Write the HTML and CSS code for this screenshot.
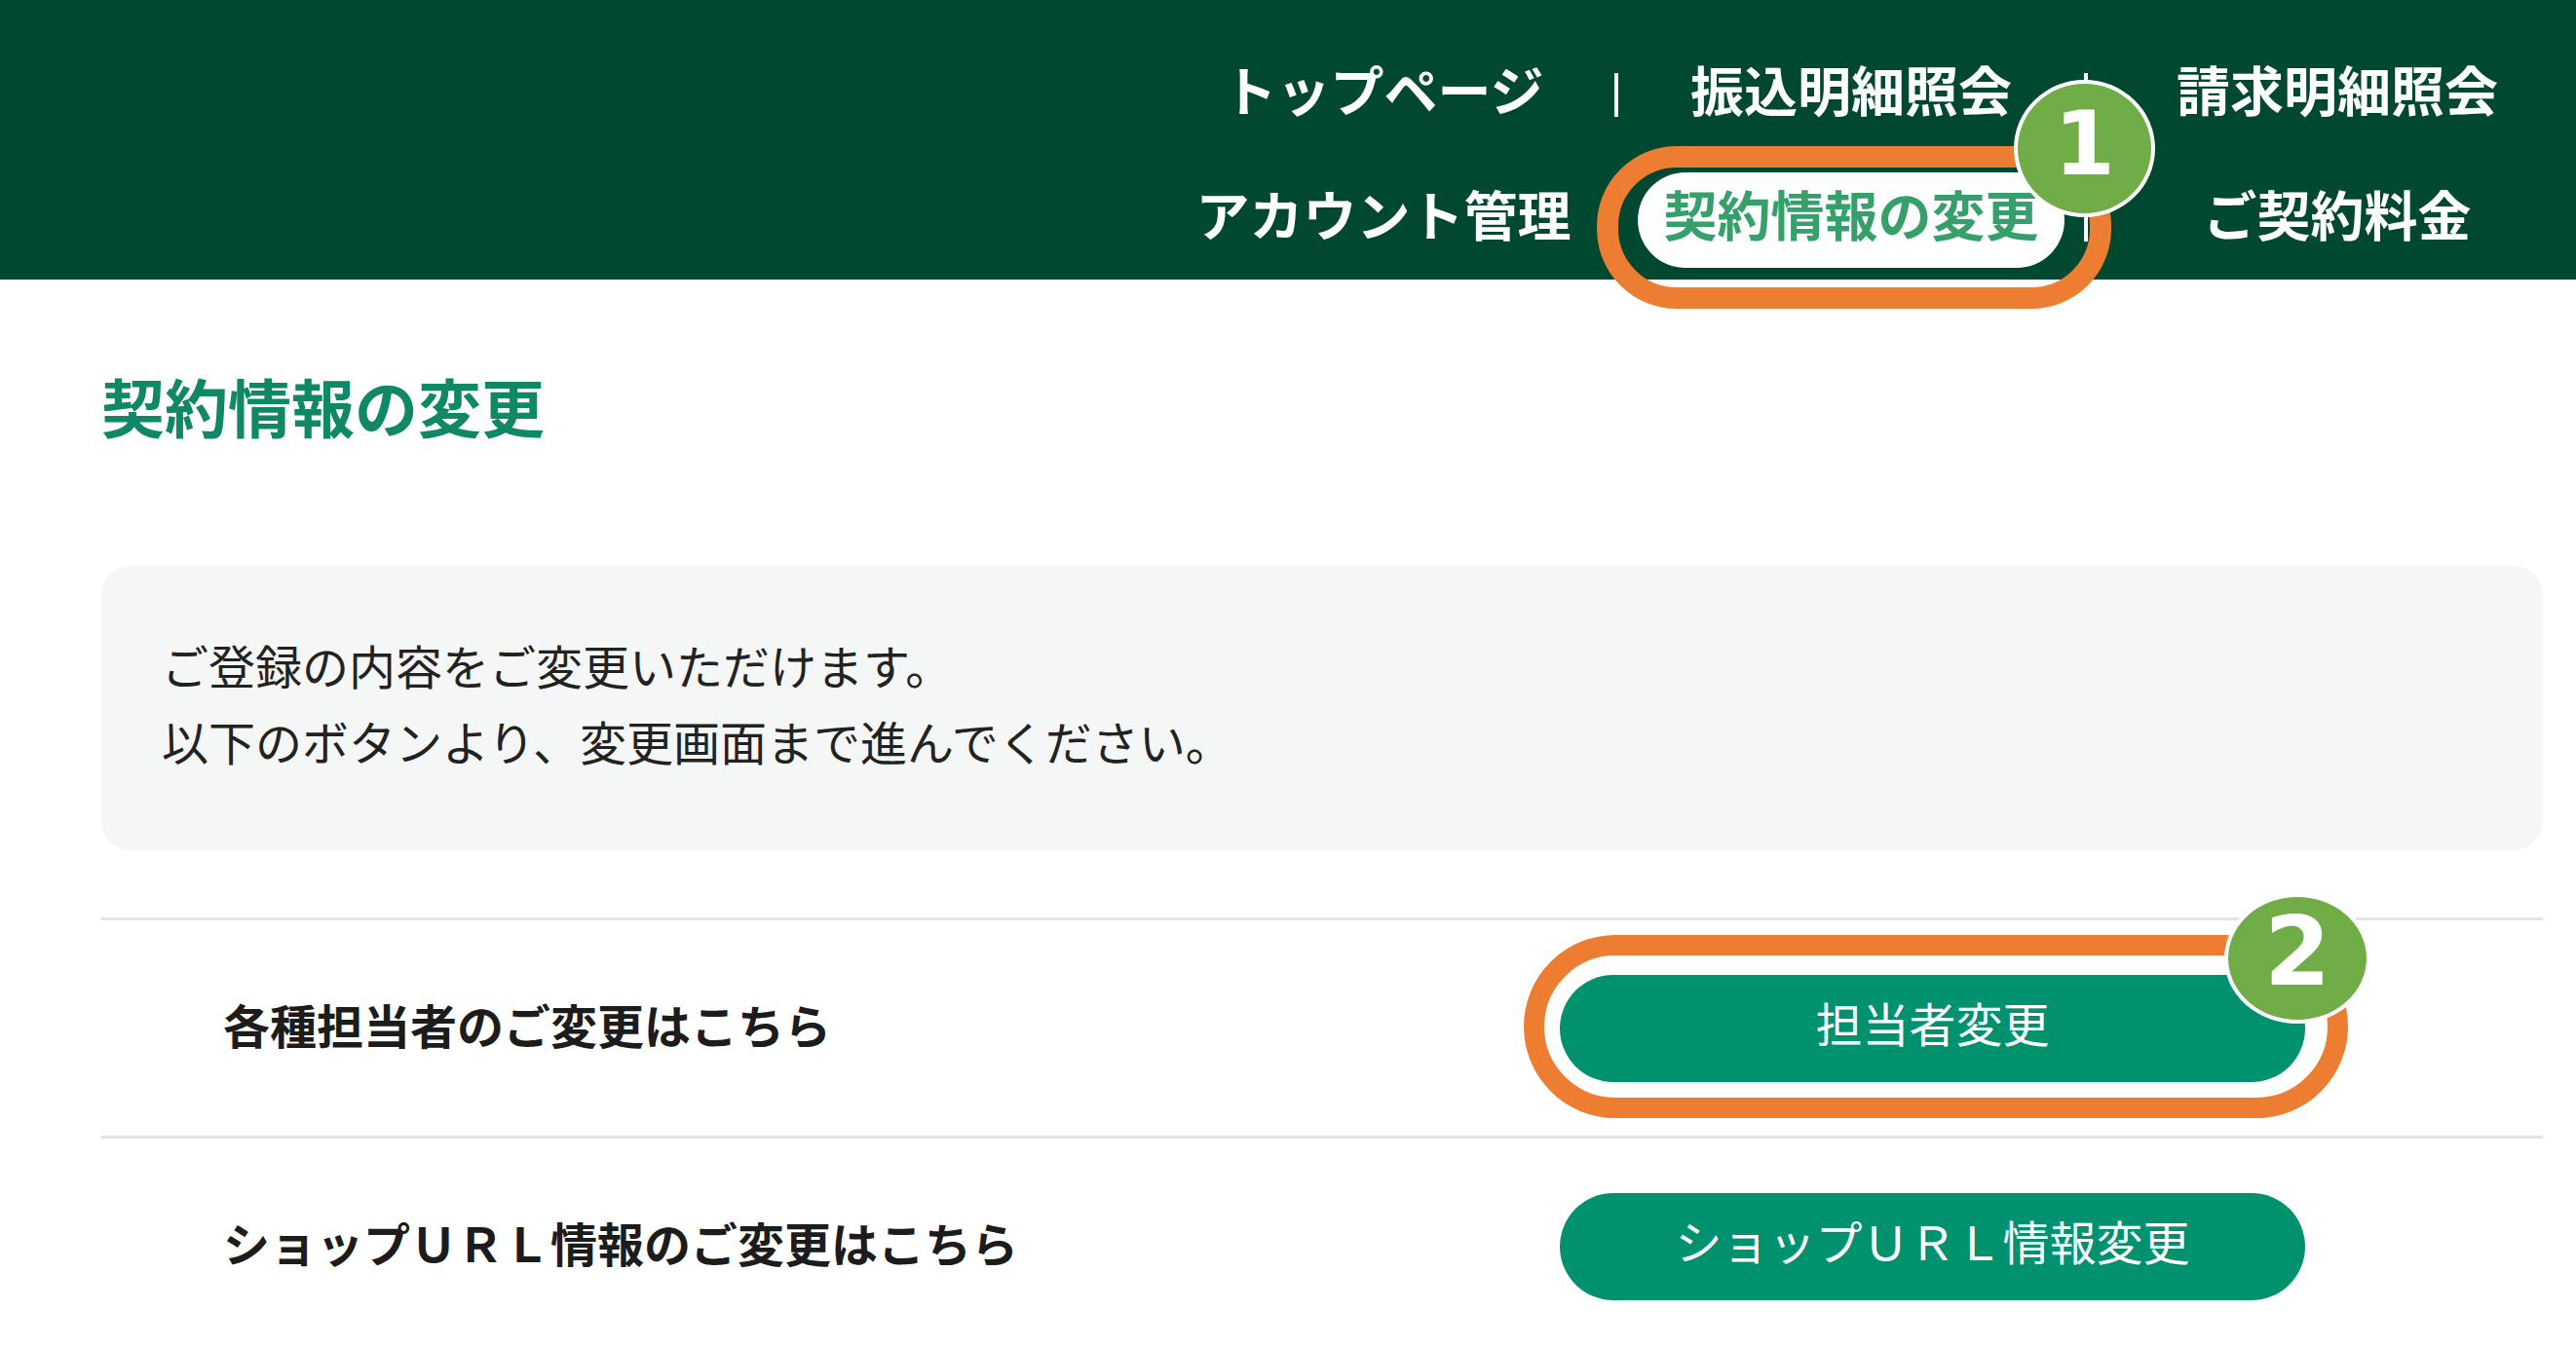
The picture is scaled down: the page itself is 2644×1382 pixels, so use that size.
FILE: index.html
```html
<!DOCTYPE html>
<html lang="ja">
<head>
    <meta charset="utf-8">
    <meta name="viewport" content="width=device-width, initial-scale=1.0">
    <title>契約情報の変更</title>
    <link rel="stylesheet" href="styles.css">
</head>
<body>
    <div class="page">
        <header class="site-header">
            <nav class="global-nav">
                <a class="nav-item" href="#">トップページ</a>
                <a class="nav-item has-sep" href="#">振込明細照会</a>
                <a class="nav-item has-sep" href="#">請求明細照会</a>
                <a class="nav-item lower" href="#">アカウント管理</a>
                <a class="nav-item lower has-sep is-current" href="#"><span>契約情報の変更</span></a>
                <a class="nav-item lower has-sep" href="#">ご契約料金</a>
            </nav>
        </header>

        <main class="content">
            <h1 class="page-title">契約情報の変更</h1>

            <div class="notice">
                <p>ご登録の内容をご変更いただけます。</p>
                <p>以下のボタンより、変更画面まで進んでください。</p>
            </div>

            <div class="change-list">
                <div class="change-row">
                    <p class="change-label">各種担当者のご変更はこちら</p>
                    <a class="change-button" href="#">担当者変更</a>
                </div>
                <div class="change-row">
                    <p class="change-label">ショップＵＲＬ情報のご変更はこちら</p>
                    <a class="change-button" href="#">ショップＵＲＬ情報変更</a>
                </div>
            </div>
        </main>

        <!-- manual markers drawn over the screenshot -->
        <div class="callout callout-nav"></div>
        <div class="step-badge badge-nav">1</div>
        <div class="callout callout-button"></div>
        <div class="step-badge badge-button">2</div>
    </div>
</body>
</html>
```

FILE: styles.css
```css
* {
    margin: 0;
    padding: 0;
    box-sizing: border-box;
}

html,
body {
    overflow: hidden;
}

body {
    background: #fff;
    color: #222;
    font-family: "Noto Sans CJK JP", "Noto Sans", sans-serif;
}

.page {
    position: relative;
    min-height: 100vh;
}

/* header */

.site-header {
    height: 287px;
    background: #00482f;
    display: flex;
    justify-content: flex-end;
    padding-top: 58px;
    overflow: hidden;
}

.global-nav {
    display: grid;
    grid-template-columns: 478px 482px 516px;
    grid-auto-rows: 64px;
    row-gap: 64px;
    margin-right: -13px;
}

.nav-item {
    position: relative;
    display: flex;
    justify-content: center;
    align-items: center;
    height: 64px;
    line-height: 64px;
    font-size: 55px;
    font-weight: bold;
    color: #fff;
    text-decoration: none;
    white-space: nowrap;
}

.nav-item.has-sep::before {
    content: "";
    position: absolute;
    left: -2px;
    top: 17px;
    width: 4px;
    height: 45px;
    background: #fff;
}

.nav-item.lower.has-sep::before {
    top: 27px;
    height: 35px;
}

.nav-item.is-current span {
    line-height: 64px;
    padding: 9px 26px 25px;
    margin: -9px 0 -25px;
    background: #fff;
    border-radius: 49px;
    color: #36a06b;
}

/* content */

.content {
    padding: 80px 34px 0 104px;
}

.page-title {
    font-size: 65px;
    line-height: 98px;
    font-weight: bold;
    color: #0f8866;
    margin-bottom: 116px;
}

.notice {
    background: #f5f7f6;
    border-radius: 30px;
    padding: 62px 62px 74px;
    font-size: 48px;
    line-height: 78px;
    margin-bottom: 69px;
}

.change-row {
    display: grid;
    grid-template-columns: 1fr 1fr;
    align-items: center;
    height: 224px;
    border-top: 3px solid #e4e4e4;
}

.change-label {
    padding-left: 125px;
    padding-bottom: 10px;
    font-size: 48px;
    line-height: 72px;
    font-weight: bold;
    color: #1c1c1c;
    white-space: nowrap;
}

.change-button {
    justify-self: center;
    display: flex;
    justify-content: center;
    align-items: center;
    width: 765px;
    height: 110px;
    padding-bottom: 14px;
    border-radius: 55px;
    background: #00916f;
    color: #fff;
    font-size: 48px;
    line-height: 72px;
    text-decoration: none;
    white-space: nowrap;
}

/* markers */

.callout {
    position: absolute;
    border: 22px solid #ed7d31;
    border-radius: 82px;
}

.callout-nav {
    left: 1639px;
    top: 150px;
    width: 528px;
    height: 167px;
}

.callout-button {
    left: 1564px;
    top: 960px;
    width: 846px;
    height: 188px;
    border-width: 21px;
    border-radius: 95px;
}

.step-badge {
    position: absolute;
    display: flex;
    justify-content: center;
    align-items: center;
    background: #70ad47;
    border: 4px solid #fff;
    border-radius: 50%;
    color: #fff;
    font-family: "DejaVu Sans", sans-serif;
    font-weight: bold;
    line-height: 1;
}

.badge-nav {
    left: 2067px;
    top: 82px;
    width: 145px;
    height: 141px;
    font-size: 90px;
    padding-bottom: 10px;
}

.badge-button {
    left: 2283px;
    top: 917px;
    width: 150px;
    height: 134px;
    font-size: 98px;
    padding-bottom: 14px;
}
```
